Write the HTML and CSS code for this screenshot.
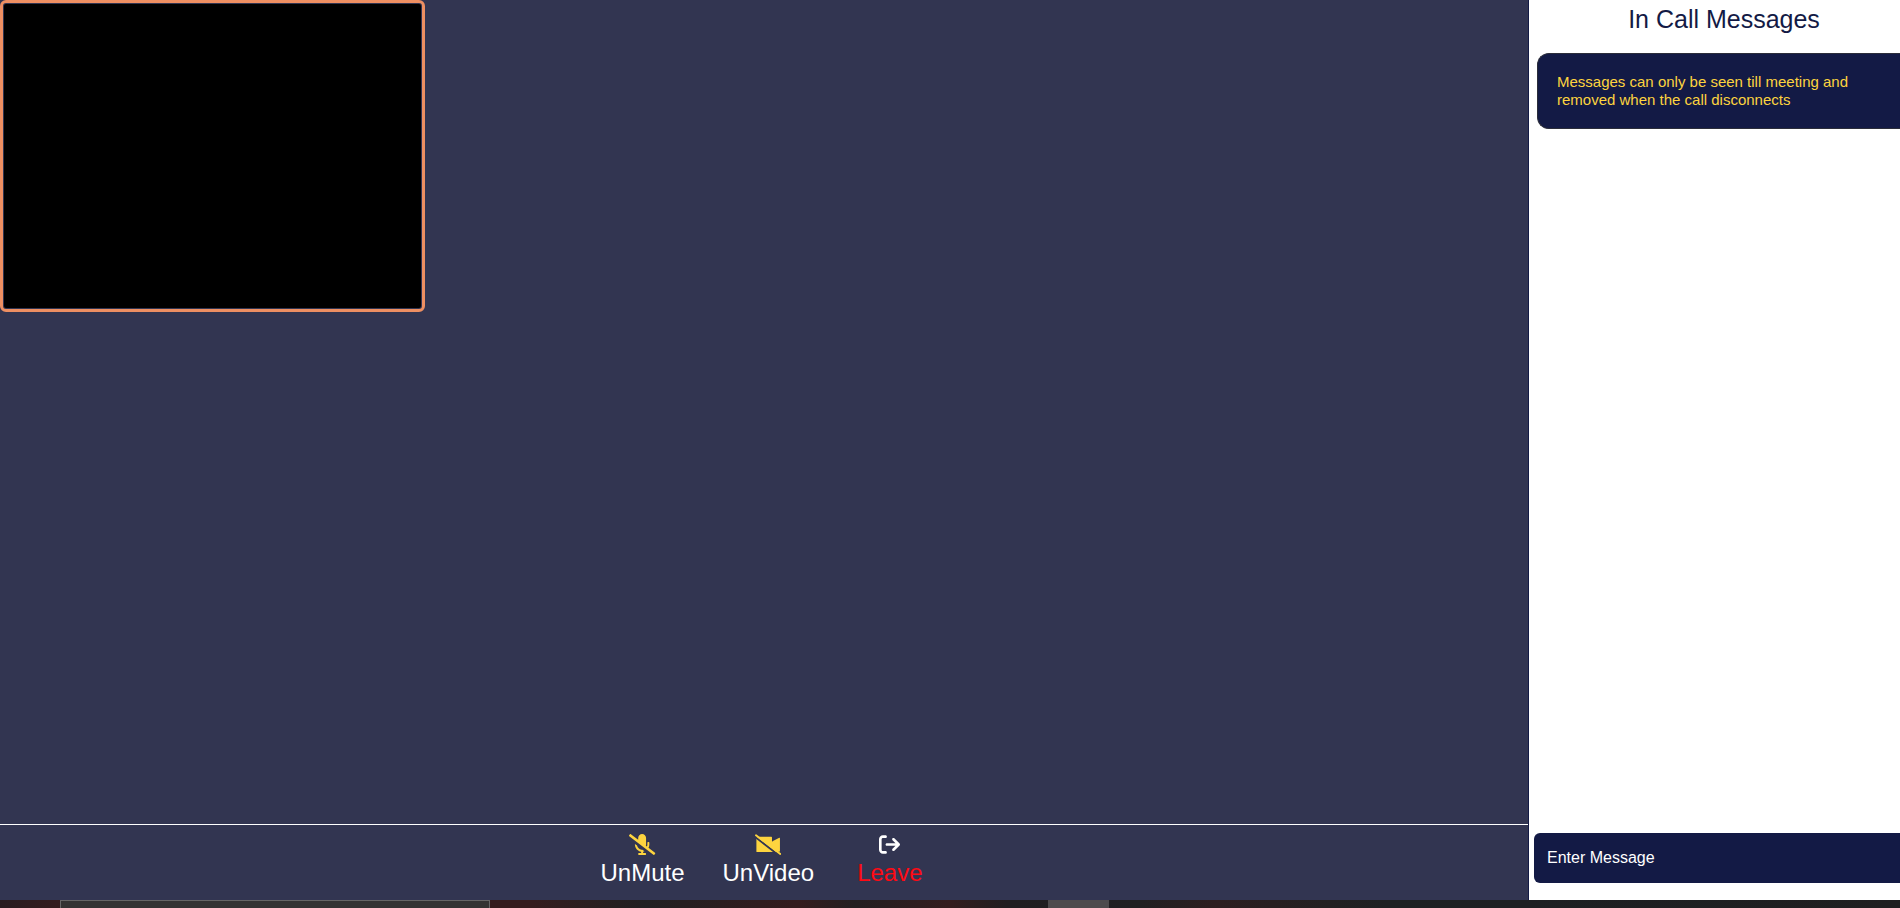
FILE: index.html
```html
<!DOCTYPE html>
<html lang="en">
<head>
<meta charset="utf-8">
<title>Meeting</title>
<link rel="stylesheet" href="styles.css">
</head>
<body>
<div class="room">
  <main class="stage">
    <section class="videos">
      <video class="video" aria-label="Your camera"></video>
    </section>
    <nav class="controls">
      <button class="control" type="button">
        <svg class="icon icon-off" viewBox="0 0 640 512" aria-hidden="true"><path d="M633.82 458.1l-157.8-121.96C488.61 312.13 496 285.01 496 256v-48c0-8.84-7.16-16-16-16h-16c-8.84 0-16 7.16-16 16v48c0 17.92-3.96 34.8-10.72 50.2l-26.55-20.52c3.1-9.4 5.28-19.22 5.28-29.67V96c0-53.02-42.98-96-96-96s-96 42.98-96 96v45.36L45.47 3.37C38.49-2.05 28.43-.8 23.01 6.18L3.37 31.45C-2.05 38.42-.8 48.47 6.18 53.9l588.36 454.73c6.98 5.43 17.03 4.17 22.46-2.81l19.64-25.27c5.41-6.97 4.16-17.02-2.82-22.45zM400 464h-56v-33.77c11.66-1.6 22.85-4.54 33.67-8.31l-50.11-38.73c-6.71.4-13.41.87-20.35.2-55.85-5.45-98.74-48.63-111.18-101.85L144 241.31v6.85c0 89.64 63.97 169.55 152 181.69V464h-56c-8.84 0-16 7.16-16 16v16c0 8.84 7.16 16 16 16h160c8.84 0 16-7.16 16-16v-16c0-8.84-7.16-16-16-16z"/></svg>
        <span>UnMute</span>
      </button>
      <button class="control" type="button">
        <svg class="icon icon-off" viewBox="0 0 640 512" aria-hidden="true">
          <path d="M48 70h352q14 0 14 14v100l178-92q16-6 16 12v336H48q-14 0-14-14V84q0-14 14-14z"/>
          <path class="gap" d="M416 60h16v110l-16 14zM450 450h170l-20-26z"/>
          <path class="gap-line" d="M0 68l580 452"/>
          <path class="slash" d="M24 30l592 456"/>
        </svg>
        <span>UnVideo</span>
      </button>
      <button class="control control-leave" type="button">
        <svg class="icon" viewBox="0 0 512 512" aria-hidden="true"><path d="M502.600 278.600c12.500-12.500 12.500-32.800 0-45.300l-128-128c-12.500-12.500-32.800-12.500-45.300 0s-12.500 32.800 0 45.300L402.700 224H192c-17.700 0-32 14.300-32 32s14.300 32 32 32h210.700l-73.400 73.400c-12.500 12.500-12.500 32.800 0 45.300s32.800 12.500 45.300 0l128-128zM160 96c17.700 0 32-14.300 32-32s-14.300-32-32-32H96C43 32 0 75 0 128v256c0 53 43 96 96 96h64c17.700 0 32-14.300 32-32s-14.300-32-32-32H96c-17.700 0-32-14.300-32-32V128c0-17.700 14.300-32 32-32h64z"/></svg>
        <span>Leave</span>
      </button>
    </nav>
  </main>
  <aside class="chat">
    <h1 class="chat-title">In Call Messages</h1>
    <p class="notice">Messages can only be seen till meeting and removed when the call disconnects</p>
    <form class="composer">
      <input class="message" type="text" placeholder="Enter Message" aria-label="Enter Message">
    </form>
  </aside>
</div>
<footer class="taskbar">
  <div class="task-search"></div>
  <div class="task-active"></div>
</footer>
</body>
</html>
```

FILE: styles.css
```css
* {
  box-sizing: border-box;
}

body {
  margin: 0;
  height: 100vh;
  display: flex;
  flex-direction: column;
  overflow: hidden;
  font-family: "Liberation Sans", Arial, sans-serif;
}

.room {
  flex: 1;
  display: flex;
  min-height: 0;
}

.stage {
  flex: 1;
  display: flex;
  flex-direction: column;
  background: #323551;
}

.videos {
  flex: 1;
}

.video {
  display: block;
  width: 425px;
  height: 312px;
  padding: 1px;
  border: 3px solid #ee8f62;
  border-radius: 6px;
  background: #000 content-box;
}

.controls {
  display: flex;
  justify-content: center;
  gap: 32px;
  height: 76px;
  padding-top: 9px;
  border-top: 1px solid #fff;
}

.control {
  display: flex;
  flex-direction: column;
  align-items: center;
  gap: 4px;
  padding: 0 3px;
  border: 0;
  background: none;
  color: #fff;
  font: 24px/28px "Liberation Sans", Arial, sans-serif;
}

.control-leave {
  padding: 0 8px;
  color: #ff0a14;
}

.icon {
  height: 21px;
  fill: #fff;
}

.icon-off {
  fill: #fdd43f;
}

.gap {
  fill: #323551;
}

.gap-line {
  stroke: #323551;
  stroke-width: 44px;
}

.slash {
  stroke: #fdd43f;
  stroke-width: 46px;
  stroke-linecap: round;
}

.chat {
  flex: none;
  width: 372px;
  display: flex;
  flex-direction: column;
  padding-left: 5px;
  overflow: hidden;
  border-left: 1px solid #131a45;
  background: #fff;
}

.chat-title {
  margin: 0;
  padding: 5px 0 0 14px;
  color: #131a45;
  font-size: 25px;
  line-height: 29px;
  font-weight: 400;
  text-align: center;
}

.notice {
  margin: 19px 0 0 3px;
  padding: 19px 40px 19px 19px;
  border: 1px solid #2b2d3a;
  border-right: 0;
  border-radius: 12px 0 0 12px;
  background: #131a45;
  color: #fdd43f;
  font-size: 15px;
  line-height: 18px;
}

.composer {
  margin-top: auto;
  padding-bottom: 17px;
}

.message {
  display: block;
  width: 100%;
  height: 50px;
  padding: 0 13px;
  border: 0;
  border-radius: 6px 0 0 6px;
  background: #131a45;
  color: #fff;
  font: 16px/20px "Liberation Sans", Arial, sans-serif;
}

.message::placeholder {
  color: #fff;
  opacity: 1;
}

.taskbar {
  display: flex;
  height: 8px;
  background: linear-gradient(90deg, #281c20 0%, #341c1e 3%, #341c1e 28%, #202022 34%, #341c1e 42%, #221f21 45%, #341c1e 50%, #201e21 53%, #202022 60%, #2c1e20 64%, #1d2123 73%, #1d2023 80%, #1f1f20 100%);
}

.task-search {
  width: 430px;
  margin-left: 60px;
  border: 1px solid #666;
  border-bottom: 0;
  background: #333;
}

.task-active {
  width: 61px;
  margin-left: 558px;
  background: #4d4b4d;
}
```
